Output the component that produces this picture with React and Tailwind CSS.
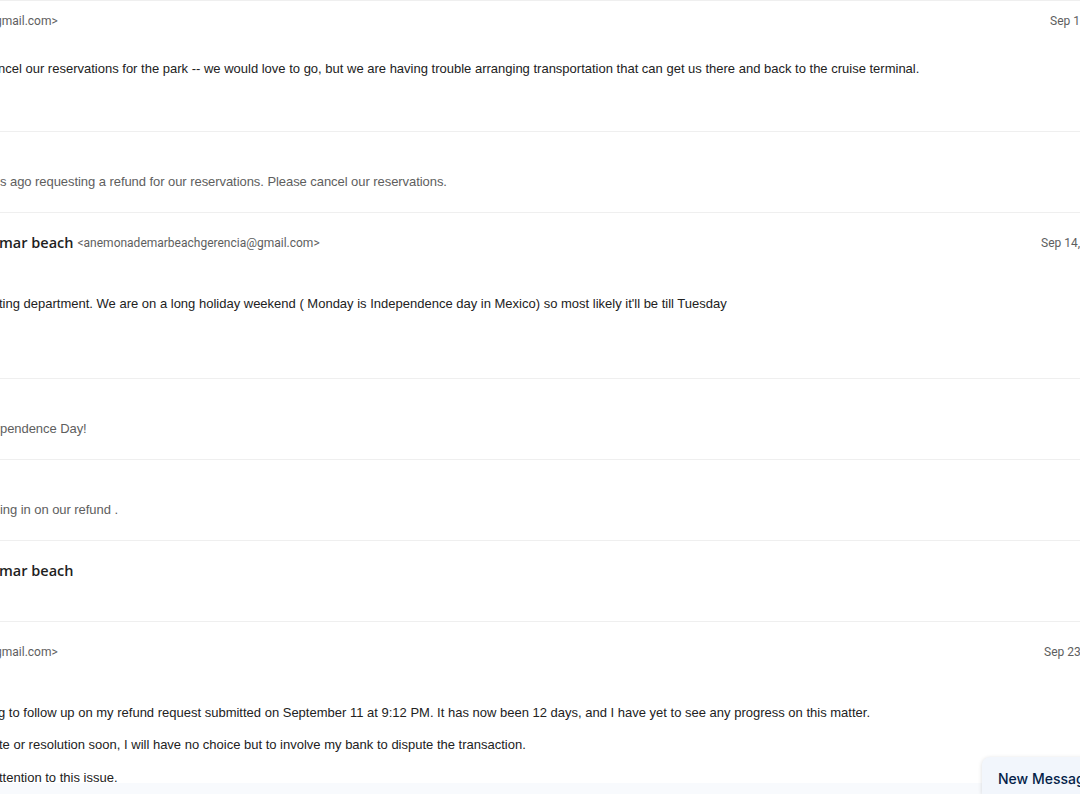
import React from 'react';

const sans = { fontFamily: 'Roboto, "Liberation Sans", Arial, sans-serif' };
const arial = { fontFamily: '"Liberation Sans", Arial, sans-serif' };
const nameFont = { fontFamily: '"Open Sans", Roboto, sans-serif' };

function Name({ children }) {
  return (
    <span className="-ml-px text-[14.5px] font-semibold text-[#1f1f1f]" style={nameFont}>
      {children}
    </span>
  );
}

function Header({ name, email, date, dateLeft }) {
  return (
    <div className="flex h-5 items-center whitespace-nowrap">
      <div className="flex shrink-0 items-center" style={{ width: dateLeft }}>
        {name && <Name>{name}</Name>}
        {email && (
          <span className={`text-[12px] text-[#5e5e5e] ${name ? 'ml-1' : '-ml-[5px]'}`}>{email}</span>
        )}
      </div>
      <span className="text-[12px] text-[#5e5e5e]">{date}</span>
    </div>
  );
}

function Body({ children, className = '' }) {
  return (
    <div className={`h-5 whitespace-nowrap text-[13px] leading-5 text-[#222222] ${className}`} style={arial}>
      {children}
    </div>
  );
}

function Snippet({ children }) {
  return (
    <div className="h-5 whitespace-nowrap text-[13px] leading-5 tracking-[-0.06px] text-[#5e5e5e]" style={arial}>
      {children}
    </div>
  );
}

export default function App() {
  return (
    <div className="relative h-[794px] w-[1080px] overflow-hidden bg-white" style={sans}>
      {/* message 1 */}
      <div className="h-[132px] border-y border-[#efefef] pt-[10px]">
        <Header email="gmail.com>" date="Sep 11, 2025, 9:12 PM" dateLeft={1050} />
        <Body className="mt-[28px] -ml-[2px]">
          ncel our reservations for the park -- we would love to go, but we are having trouble arranging transportation that can get us there and back to the cruise terminal.
        </Body>
      </div>

      {/* collapsed */}
      <div className="h-[81px] border-b border-[#efefef] pt-[40px]">
        <Snippet>s ago requesting a refund for our reservations. Please cancel our reservations.</Snippet>
      </div>

      {/* message 3 */}
      <div className="h-[166px] border-b border-[#efefef] pt-[20px]">
        <Header name="mar beach" email="<anemonademarbeachgerencia@gmail.com>" date="Sep 14, 2025, 10:03 AM" dateLeft={1041} />
        <Body className="mt-[41px] -ml-px">
          ting department. We are on a long holiday weekend ( Monday is Independence day in Mexico) so most likely it'll be till Tuesday
        </Body>
      </div>

      <div className="h-[81px] border-b border-[#efefef] pt-[40px]">
        <Snippet>pendence Day!</Snippet>
      </div>

      <div className="h-[81px] border-b border-[#efefef] pt-[40px]">
        <Snippet>ing in on our refund .</Snippet>
      </div>

      <div className="h-[81px] border-b border-[#efefef] pt-[20px]">
        <div className="flex h-5 items-center whitespace-nowrap">
          <Name>mar beach</Name>
        </div>
      </div>

      {/* message 7 */}
      <div className="pt-[20px]">
        <Header email="gmail.com>" date="Sep 23, 2025, 8:40 PM" dateLeft={1044} />
        <Body className="mt-[41px] -ml-[2px]">
          g to follow up on my refund request submitted on September 11 at 9:12 PM. It has now been 12 days, and I have yet to see any progress on this matter.
        </Body>
        <Body className="mt-3 -ml-px">
          te or resolution soon, I will have no choice but to involve my bank to dispute the transaction.
        </Body>
        <Body className="mt-[13px] -ml-px">ttention to this issue.</Body>
      </div>

      <div className="absolute bottom-0 left-0 h-[11px] w-full bg-[#f8fafd]" />

      <div className="absolute bottom-0 left-[982px] flex h-[37px] w-[200px] items-center rounded-tl-lg bg-[#f2f6fc] pl-4 pt-[6px] shadow-[0_1px_4px_rgba(0,0,0,0.15)]">
        <span className="whitespace-nowrap text-[14px] font-medium text-[#041e49]" style={{ fontFamily: 'Inter, Roboto, sans-serif' }}>
          New Message
        </span>
      </div>
    </div>
  );
}
